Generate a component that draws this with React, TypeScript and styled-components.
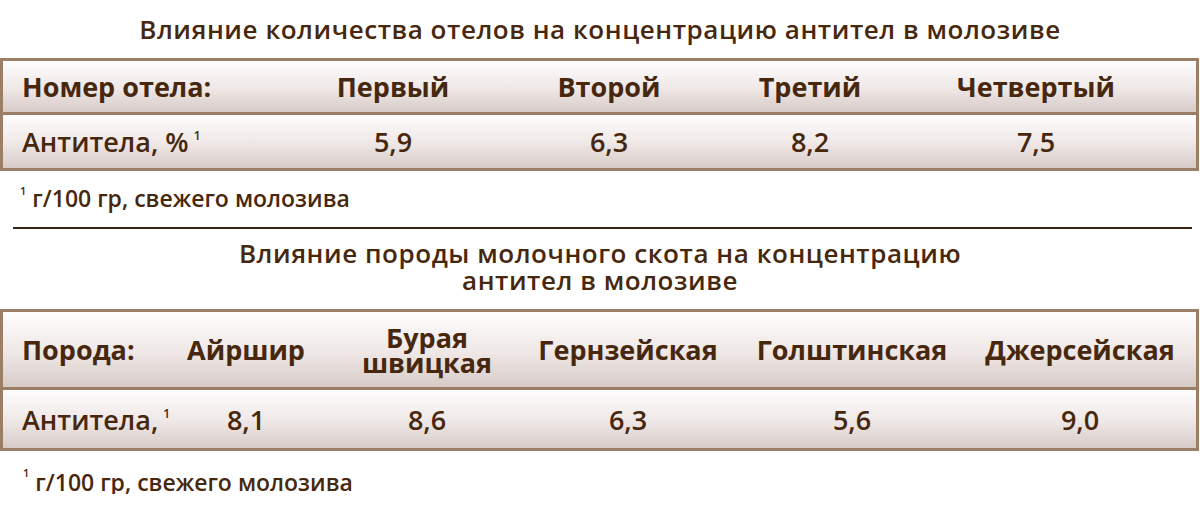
import styled, { createGlobalStyle } from "styled-components";

const GlobalStyle = createGlobalStyle`
  html, body {
    margin: 0;
    padding: 0;
    background: #ffffff;
  }
  body {
    font-family: "Open Sans", "Noto Sans", sans-serif;
    color: #47280e;
  }
`;

const Page = styled.main`
  width: 1200px;
  display: flex;
  flex-direction: column;
`;

const Title = styled.h2<{ $top: number; $bottom: number }>`
  margin: 0;
  padding: ${(p) => p.$top}px 0 ${(p) => p.$bottom}px;
  text-align: center;
  font-size: 26px;
  line-height: 27px;
  font-weight: 600;
  letter-spacing: 0.55px;
  color: #47280e;
`;

const TitleLine = styled.span`
  display: block;
  height: 27px;
`;

const Table = styled.section`
  width: 1199px;
  box-sizing: border-box;
  border: 3px solid #9c7d66;
  display: flex;
  flex-direction: column;
`;

const Row = styled.div<{ $cols: string; $height: number; $divider?: boolean }>`
  display: grid;
  grid-template-columns: ${(p) => p.$cols};
  align-items: center;
  height: ${(p) => p.$height}px;
  border-top: ${(p) => (p.$divider ? "3px solid #9c7d66" : "none")};
  background: linear-gradient(180deg, #fefdfd 0%, #eee7e5 55%, #d7cbc7 100%);
`;

const Label = styled.div<{ $weight: number }>`
  padding-left: 19px;
  font-size: 27px;
  font-weight: ${(p) => p.$weight};
  white-space: nowrap;
  color: #47280e;
`;

const HeadCell = styled.div`
  text-align: center;
  font-size: 27px;
  font-weight: 700;
  line-height: 25px;
  white-space: nowrap;
  color: #47280e;
`;

const HeadLine = styled.span`
  display: block;
  height: 25px;
`;

const ValueCell = styled.div`
  text-align: center;
  font-size: 27px;
  font-weight: 600;
  color: #47280e;
`;

const Sup = styled.sup<{ $lift: number }>`
  font-size: 12px;
  font-weight: 600;
  vertical-align: ${(p) => p.$lift}px;
  margin-left: 5px;
  line-height: 0;
`;

const Footnote = styled.p<{ $top: number; $indent: number }>`
  margin: ${(p) => p.$top}px 0 0;
  padding-left: ${(p) => p.$indent}px;
  font-size: 23px;
  line-height: 24px;
  font-weight: 600;
  color: #47280e;
`;

const FootMark = styled.sup<{ $lift: number }>`
  font-size: 11px;
  font-weight: 600;
  vertical-align: ${(p) => p.$lift}px;
  margin-right: 6px;
  line-height: 0;
`;

const Divider = styled.hr`
  margin: 17px 0 0 13px;
  width: 1179px;
  height: 2px;
  border: 0;
  background: #3b2414;
`;

const calvings = ["Первый", "Второй", "Третий", "Четвертый"];
const calvingValues = ["5,9", "6,3", "8,2", "7,5"];
const calvingCols = "282px 216px 216px 186px 266px 1fr";

const breeds = [["Айршир"], ["Бурая", "швицкая"], ["Гернзейская"], ["Голштинская"], ["Джерсейская"]];
const breedValues = ["8,1", "8,6", "6,3", "5,6", "9,0"];
const breedCols = "162px 162px 200px 202px 246px 210px 1fr";

export default function App() {
  return (
    <>
      <GlobalStyle />
      <Page>
        <Title $top={16} $bottom={15}>
          Влияние количества отелов на концентрацию антител в молозиве
        </Title>

        <Table>
          <Row $cols={calvingCols} $height={51}>
            <Label $weight={700}>Номер отела:</Label>
            {calvings.map((c) => (
              <HeadCell key={c}>{c}</HeadCell>
            ))}
          </Row>
          <Row $cols={calvingCols} $height={53} $divider>
            <Label $weight={600}>
              Антитела, %<Sup $lift={12}>1</Sup>
            </Label>
            {calvingValues.map((v, i) => (
              <ValueCell key={i}>{v}</ValueCell>
            ))}
          </Row>
        </Table>

        <Footnote $top={15} $indent={20}>
          <FootMark $lift={12}>1</FootMark>г/100 гр, свежего молозива
        </Footnote>

        <Divider />

        <Title $top={11} $bottom={15}>
          <TitleLine>Влияние породы молочного скота на концентрацию</TitleLine>
          <TitleLine>антител в молозиве</TitleLine>
        </Title>

        <Table>
          <Row $cols={breedCols} $height={75}>
            <Label $weight={700}>Порода:</Label>
            {breeds.map((b) => (
              <HeadCell key={b.join(" ")}>
                {b.map((line, i) => (
                  <HeadLine key={i}>{line}</HeadLine>
                ))}
              </HeadCell>
            ))}
          </Row>
          <Row $cols={breedCols} $height={58} $divider>
            <Label $weight={600}>
              Антитела,<Sup $lift={12}>1</Sup>
            </Label>
            {breedValues.map((v, i) => (
              <ValueCell key={i}>{v}</ValueCell>
            ))}
          </Row>
        </Table>

        <Footnote $top={19} $indent={23}>
          <FootMark $lift={14}>1</FootMark>г/100 гр, свежего молозива
        </Footnote>
      </Page>
    </>
  );
}
